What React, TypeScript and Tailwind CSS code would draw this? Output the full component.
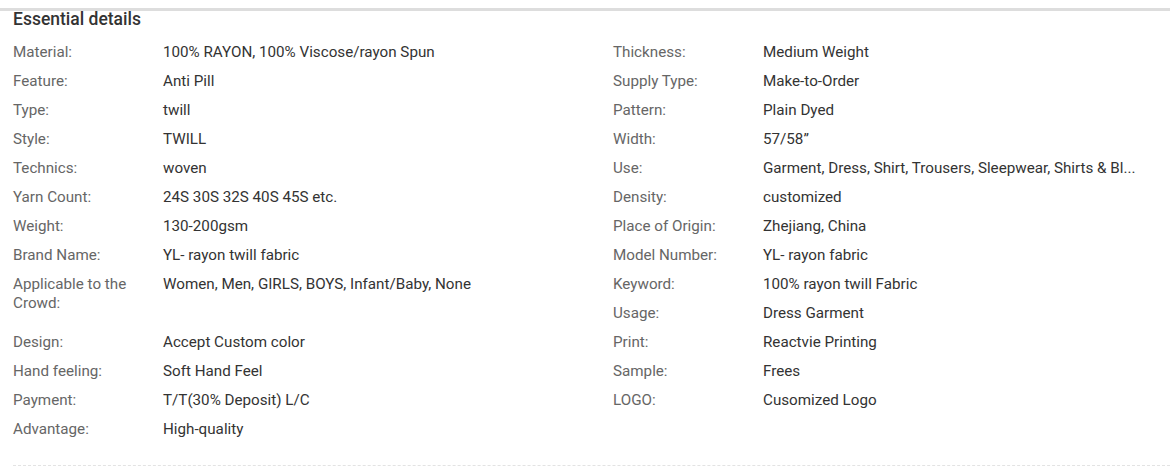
import React from "react";

type Item = { label: string; value: string; tall?: boolean };

const left: Item[] = [
  { label: "Material:", value: "100% RAYON, 100% Viscose/rayon Spun" },
  { label: "Feature:", value: "Anti Pill" },
  { label: "Type:", value: "twill" },
  { label: "Style:", value: "TWILL" },
  { label: "Technics:", value: "woven" },
  { label: "Yarn Count:", value: "24S 30S 32S 40S 45S etc." },
  { label: "Weight:", value: "130-200gsm" },
  { label: "Brand Name:", value: "YL- rayon twill fabric" },
  { label: "Applicable to the Crowd:", value: "Women, Men, GIRLS, BOYS, Infant/Baby, None", tall: true },
  { label: "Design:", value: "Accept Custom color" },
  { label: "Hand feeling:", value: "Soft Hand Feel" },
  { label: "Payment:", value: "T/T(30% Deposit) L/C" },
  { label: "Advantage:", value: "High-quality" },
];

const right: Item[] = [
  { label: "Thickness:", value: "Medium Weight" },
  { label: "Supply Type:", value: "Make-to-Order" },
  { label: "Pattern:", value: "Plain Dyed" },
  { label: "Width:", value: "57/58\u201D" },
  { label: "Use:", value: "Garment, Dress, Shirt, Trousers, Sleepwear, Shirts & Bl..." },
  { label: "Density:", value: "customized" },
  { label: "Place of Origin:", value: "Zhejiang, China" },
  { label: "Model Number:", value: "YL- rayon fabric" },
  { label: "Keyword:", value: "100% rayon twill Fabric" },
  { label: "Usage:", value: "Dress Garment" },
  { label: "Print:", value: "Reactvie Printing" },
  { label: "Sample:", value: "Frees" },
  { label: "LOGO:", value: "Cusomized Logo" },
];

function Column({ items, className }: { items: Item[]; className: string }) {
  return (
    <div className={`flex flex-col ${className}`}>
      {items.map((it) => (
        <div
          key={it.label}
          className={`flex py-[5px] leading-[19px] ${it.tall ? "h-[58px]" : "h-[29px]"}`}
        >
          <div className="w-[150px] shrink-0 pr-[10px] text-[#666]">{it.label}</div>
          <div className="flex-1 whitespace-nowrap text-[#333]">{it.value}</div>
        </div>
      ))}
    </div>
  );
}

export default function App() {
  return (
    <div className="h-[471px] w-[1171px] bg-white pt-[8px] font-[Roboto,sans-serif]">
      <div className="w-[1170px] border-t-[3px] border-[#dddddd]">
        <h3 className="px-[13px] text-[17.5px] font-medium leading-[16px] text-[#333]">
          Essential details
        </h3>
        <div className="mt-[11px] flex pl-[13px] text-[15.2px]">
          <Column items={left} className="w-[600px] shrink-0" />
          <Column items={right} className="min-w-0 flex-1" />
        </div>
        <div className="ml-[13px] mt-[21px] border-b border-dashed border-[#e3e3e3]" />
      </div>
    </div>
  );
}
